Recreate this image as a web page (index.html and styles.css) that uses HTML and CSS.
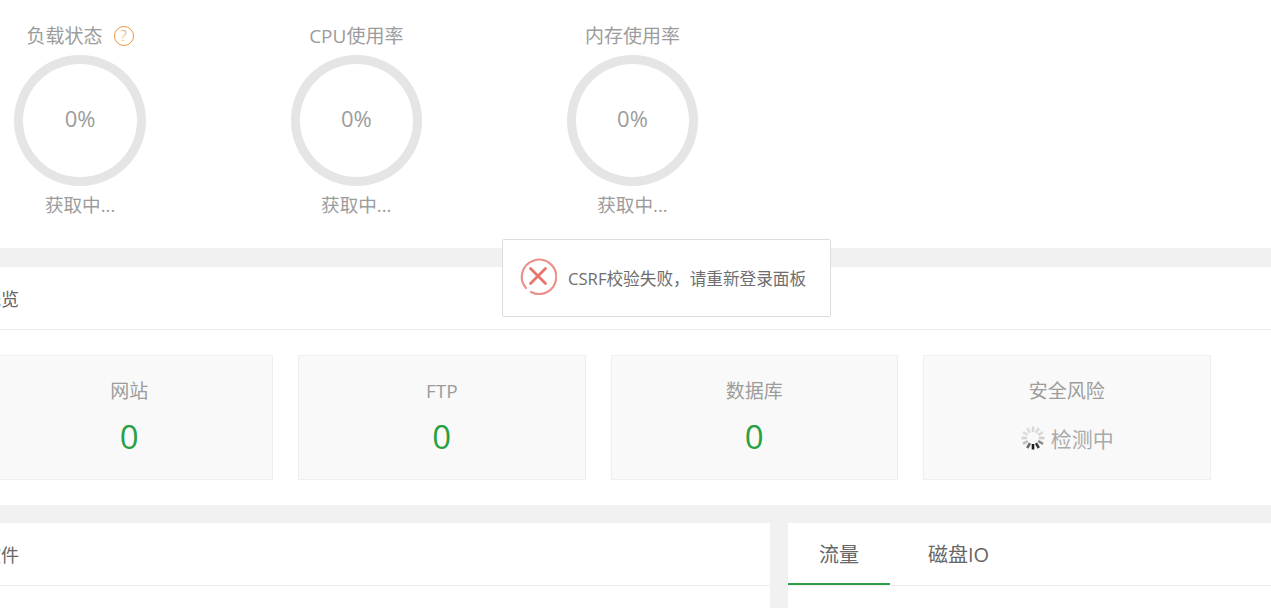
FILE: index.html
```html
<!DOCTYPE html>
<html lang="zh">
<head>
<meta charset="utf-8">
<title>面板</title>
<link rel="stylesheet" href="styles.css">
</head>
<body>
<main class="page">
  <section class="status">
    <div class="gauge">
      <div class="gauge-title">负载状态<span class="help">?</span></div>
      <div class="ring">0%</div>
      <div class="gauge-note">获取中...</div>
    </div>
    <div class="gauge">
      <div class="gauge-title">CPU使用率</div>
      <div class="ring">0%</div>
      <div class="gauge-note">获取中...</div>
    </div>
    <div class="gauge">
      <div class="gauge-title">内存使用率</div>
      <div class="ring">0%</div>
      <div class="gauge-note">获取中...</div>
    </div>
  </section>
  <section class="overview">
    <h2 class="section-head">概览</h2>
    <div class="cards">
      <div class="card"><div class="card-title">网站</div><div class="card-value">0</div></div>
      <div class="card"><div class="card-title">FTP</div><div class="card-value">0</div></div>
      <div class="card"><div class="card-title">数据库</div><div class="card-value">0</div></div>
      <div class="card">
        <div class="card-title">安全风险</div>
        <div class="checking">
          <svg class="spinner" viewBox="0 0 26 26" width="26" height="26" aria-hidden="true">
            <g stroke-width="2.6" stroke-linecap="butt">
              <line x1="13" y1="1.5" x2="13" y2="7" stroke="#d8d8d8"/>
              <line x1="18.8" y1="3" x2="16" y2="7.8" stroke="#dcdcdc"/>
              <line x1="23" y1="7.2" x2="18.2" y2="10" stroke="#d8d8d8"/>
              <line x1="24.5" y1="13" x2="19" y2="13" stroke="#cfcfcf"/>
              <line x1="23" y1="18.8" x2="18.2" y2="16" stroke="#8a8a8a"/>
              <line x1="18.8" y1="23" x2="16" y2="18.2" stroke="#3a3a3a"/>
              <line x1="13" y1="24.5" x2="13" y2="19" stroke="#1c1c1c"/>
              <line x1="7.2" y1="23" x2="10" y2="18.2" stroke="#6a6a6a"/>
              <line x1="3" y1="18.8" x2="7.8" y2="16" stroke="#c0c0c0"/>
              <line x1="1.5" y1="13" x2="7" y2="13" stroke="#d4d4d4"/>
              <line x1="3" y1="7.2" x2="7.8" y2="10" stroke="#dcdcdc"/>
              <line x1="7.2" y1="3" x2="10" y2="7.8" stroke="#dedede"/>
            </g>
          </svg>
          <span>检测中</span>
        </div>
      </div>
    </div>
  </section>
  <section class="bottom">
    <div class="panel panel-left"><h2 class="section-head">软件</h2></div>
    <div class="panel panel-right">
      <div class="tabs">
        <span class="tab tab-active">流量</span>
        <span class="tab">磁盘IO</span>
      </div>
    </div>
  </section>
</main>
<div class="toast">
  <svg class="toast-icon" viewBox="0 0 38 38" width="38" height="38" aria-hidden="true">
    <path d="M7 31 A17.2 17.2 0 1 1 12 35" fill="none" stroke="#e9918a" stroke-width="2.2" stroke-linecap="round"/>
    <path d="M11.5 11.5 L26.5 26.5 M26.5 11.5 L11.5 26.5" fill="none" stroke="#e9746c" stroke-width="2.8" stroke-linecap="round"/>
  </svg>
  <span class="toast-text">CSRF校验失败，请重新登录面板</span>
</div>
</body>
</html>
```
FILE: styles.css
```css
* { box-sizing: border-box; }
html, body { margin: 0; height: 608px; overflow: hidden; }
body {
  background: #f1f1f1;
  color: #666;
  font-family: "Open Sans", "Noto Sans CJK SC", sans-serif;
}
.page {
  width: 1329px;
  margin-left: -58px;
  display: flex;
  flex-direction: column;
}
.status {
  height: 248px;
  margin-bottom: 19px;
  background: #fff;
  display: flex;
  padding-top: 24px;
}
.gauge {
  width: 276.2px;
  display: flex;
  flex-direction: column;
  align-items: center;
  color: #9c9c9c;
}
.gauge-title {
  display: flex;
  align-items: center;
  gap: 11px;
  height: 24px;
  font-size: 19px;
  line-height: 24px;
}
.help {
  width: 20px;
  height: 20px;
  border: 1.5px solid #e8963f;
  border-radius: 50%;
  color: #e8963f;
  font-size: 15px;
  font-weight: 300;
  line-height: 17px;
  text-align: center;
}
.ring {
  width: 131.5px;
  height: 131px;
  margin-top: 7px;
  padding-bottom: 5px;
  border: 9px solid #e5e5e5;
  border-radius: 50%;
  display: flex;
  align-items: center;
  justify-content: center;
  font-size: 22px;
}
.gauge-note {
  margin-top: 7px;
  font-size: 18.6px;
  line-height: 24px;
}
.overview {
  height: 238px;
  margin-bottom: 18px;
  background: #fff;
}
.section-head {
  margin: 0;
  height: 63px;
  padding-left: 41px;
  border-bottom: 1px solid #ececec;
  font-size: 18px;
  font-weight: 400;
  line-height: 64px;
  color: #666;
}
.cards {
  display: flex;
  gap: 25px;
  padding: 25px 0 0 43.5px;
}
.card {
  width: 287.5px;
  height: 125px;
  background: #f9f9f9;
  border: 1px solid #efefef;
  display: flex;
  flex-direction: column;
  align-items: center;
  padding-top: 22px;
}
.card-title {
  font-size: 19px;
  line-height: 26px;
  color: #9c9c9c;
}
.card-value {
  margin-top: 10px;
  font-size: 33px;
  line-height: 46px;
  color: #28a043;
}
.checking {
  display: flex;
  align-items: center;
  gap: 5px;
  margin-top: 17px;
  height: 34px;
  font-size: 21px;
  color: #aaa;
}
.bottom {
  display: flex;
  gap: 18px;
  height: 90px;
}
.panel {
  background: #fff;
  height: 100%;
}
.panel-left { width: 828px; }
.panel-right { width: 483px; }
.tabs {
  display: flex;
  gap: 7px;
  height: 63px;
  border-bottom: 1px solid #ececec;
}
.tab {
  height: 62px;
  padding: 0 31px;
  font-size: 20px;
  line-height: 64px;
  color: #666;
}
.tab-active {
  border-bottom: 2px solid #2a9f47;
}
.toast {
  position: fixed;
  left: 502px;
  top: 239px;
  width: 329px;
  height: 78px;
  background: #fff;
  border: 1px solid #ddd;
  border-radius: 2px;
  display: flex;
  align-items: center;
  gap: 11px;
  padding-left: 16px;
}
.toast-icon {
  margin-bottom: 4px;
}
.toast-text {
  font-size: 16.65px;
  color: #6e6e6e;
}
```
